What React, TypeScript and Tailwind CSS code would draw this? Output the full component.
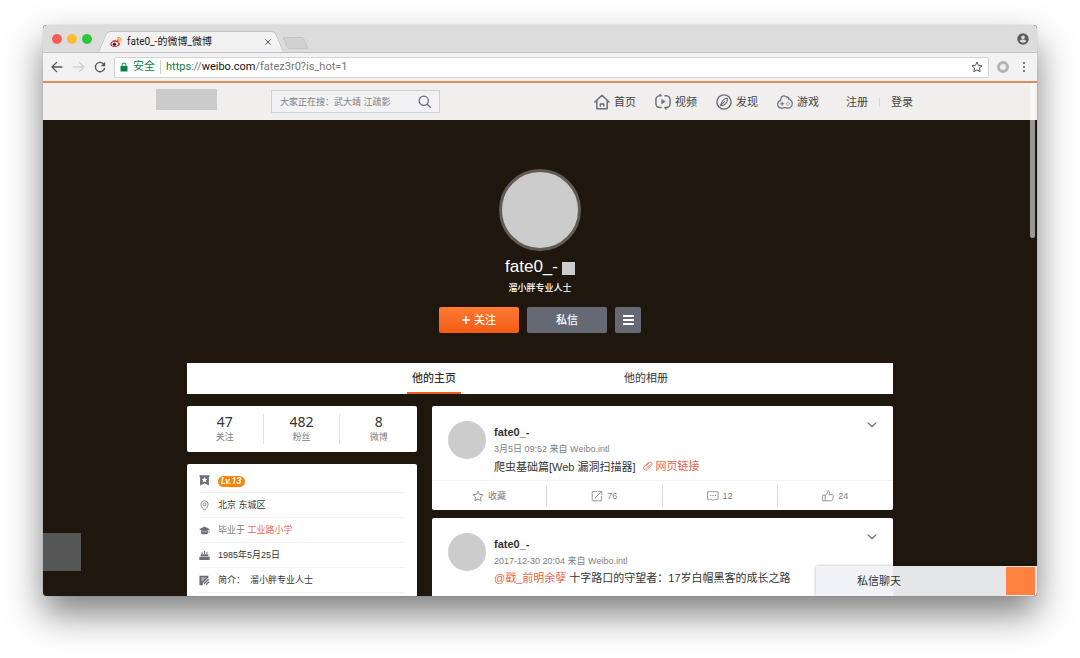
import React from "react";

type IconProps = { className?: string };

const stroke = {
  fill: "none",
  stroke: "currentColor",
  strokeLinecap: "round" as const,
  strokeLinejoin: "round" as const,
};

function WeiboIcon({ className }: IconProps) {
  return (
    <svg viewBox="0 0 24 24" className={className} aria-hidden="true">
      <path d="M9.500 8C4.500 9 .8 13 .8 16.300c0 3.400 4.200 5.700 9 5.700 6 0 10-3.200 10-6.200 0-2-1.600-3-3.200-3.400.6-1.800.4-3.400-1-3.900-1.300-.5-3.200.1-4.600.8.6-1.600-.1-2-1.500-1.300z" fill="#d9232e" />
      <ellipse cx="9.800" cy="16" rx="6.400" ry="4.300" fill="#fff" transform="rotate(-8 9.800 16)" />
      <circle cx="9" cy="16.300" r="3.400" fill="#151515" />
      <circle cx="10" cy="15.200" r="0.900" fill="#fff" />
      <path d="M15 3.400c4.600-.8 8 2.600 7 7.300M15.400 6.900c2.400-.4 3.900 1.100 3.500 3.400" fill="none" stroke="#f4a331" strokeWidth="2.400" strokeLinecap="round" />
    </svg>
  );
}

function HomeIcon({ className }: IconProps) {
  return (
    <svg viewBox="0 0 16 16" className={className} {...stroke} strokeWidth="1.500" aria-hidden="true">
      <path d="M.9 8 8 1.300 15.100 8M2.800 6.800v7.900h10.400V6.800M6.300 12V9.900h3.400V12" />
    </svg>
  );
}

function VideoIcon({ className }: IconProps) {
  return (
    <svg viewBox="0 0 16 16" className={className} {...stroke} strokeWidth="1.500" aria-hidden="true">
      <path d="M6 1.800H4.800A4 4 0 0 0 .9 5.800v3.800a4 4 0 0 0 3.900 4H6M10 1.800h1.200a4 4 0 0 1 3.900 4v3.800a4 4 0 0 1-3.900 4H10M10 13.600l1 1.500M6 1.800 5 .6" />
      <path d="M6.700 5.700v4l3.300-2z" fill="currentColor" strokeWidth="0.600" />
    </svg>
  );
}

function CompassIcon({ className }: IconProps) {
  return (
    <svg viewBox="0 0 16 16" className={className} {...stroke} strokeWidth="1.400" aria-hidden="true">
      <circle cx="8" cy="8" r="7.100" />
      <path d="M11.600 4.200C9 4.300 5.900 5.800 4.400 11.600 7.500 11.600 11.400 10 11.600 4.200zM4.600 11.400 8.400 7.600" strokeWidth="1.100" />
    </svg>
  );
}

function GameIcon({ className }: IconProps) {
  return (
    <svg viewBox="0 0 18 16" className={className} {...stroke} strokeWidth="1.400" aria-hidden="true">
      <path d="M4 6.200C4.200 3.200 6 1 8 1c1.400 0 1.800 1.300 2.900 1.300 1.600 0 2.500 1.200 2.500 2.900 2.300.5 3.800 2.200 3.800 4.500 0 3-2.300 5.200-4.900 5.200-1.500 0-2-.7-3.500-.7s-2.200.7-3.900.7C2.400 14.900.8 12.900.8 10.500.8 8.300 2 6.600 4 6.200z" />
      <path d="M5.800 8.200v3.400M4.100 9.900h3.400" strokeWidth="1.200" />
      <path d="M10.600 10h.1M13.800 10h.1M12.200 8.400h.1M12.200 11.600h.1" strokeWidth="1.300" />
    </svg>
  );
}

function SearchIcon({ className }: IconProps) {
  return (
    <svg viewBox="0 0 14 14" className={className} {...stroke} strokeWidth="1.400" aria-hidden="true">
      <circle cx="6.200" cy="6.200" r="5" />
      <path d="m10 10 3.200 3.200" />
    </svg>
  );
}

function BackIcon({ className }: IconProps) {
  return (
    <svg viewBox="0 0 12 12" className={className} {...stroke} strokeWidth="1.300" aria-hidden="true">
      <path d="M11 6H1.200M5.600 1.400 1 6l4.600 4.600" />
    </svg>
  );
}

function ForwardIcon({ className }: IconProps) {
  return (
    <svg viewBox="0 0 12 12" className={className} {...stroke} strokeWidth="1.300" aria-hidden="true">
      <path d="M1 6h9.800M6.400 1.400 11 6l-4.600 4.600" />
    </svg>
  );
}

function ReloadIcon({ className }: IconProps) {
  return (
    <svg viewBox="0 0 12 12" className={className} aria-hidden="true">
      <path d="M10 3.400A4.700 4.700 0 1 0 10.700 7" fill="none" stroke="currentColor" strokeWidth="1.300" />
      <path d="M11.200.8v4.400H6.800z" fill="currentColor" />
    </svg>
  );
}

function LockIcon({ className }: IconProps) {
  return (
    <svg viewBox="0 0 8 10" className={className} aria-hidden="true">
      <rect x="0.500" y="4" width="7" height="5.500" rx="0.600" fill="currentColor" />
      <path d="M2.200 4.400V2.800a1.800 1.800 0 0 1 3.600 0v1.600" fill="none" stroke="currentColor" strokeWidth="1" />
    </svg>
  );
}

function StarIcon({ className }: IconProps) {
  return (
    <svg viewBox="0 0 12 12" className={className} fill="none" stroke="currentColor" strokeWidth="1" strokeLinejoin="round" aria-hidden="true">
      <path d="M6 1l1.500 3.300 3.600.4-2.700 2.400.8 3.600L6 8.900l-3.200 1.800.8-3.600L.9 4.700l3.600-.4z" />
    </svg>
  );
}

function PersonIcon({ className }: IconProps) {
  return (
    <svg viewBox="0 0 24 24" className={className} fill="currentColor" aria-hidden="true">
      <path fillRule="evenodd" d="M12 .5a11.500 11.500 0 1 0 0 23 11.500 11.500 0 0 0 0-23zm0 4.300a3.700 3.700 0 1 1 0 7.400 3.700 3.700 0 0 1 0-7.400zm0 14.600c-2.800 0-5.200-1.300-6.600-3.300.1-2 4.400-3.100 6.600-3.100s6.500 1.100 6.600 3.100c-1.400 2-3.800 3.300-6.600 3.300z" />
    </svg>
  );
}

function BadgeIcon({ className }: IconProps) {
  return (
    <svg viewBox="0 0 10 10" className={className} aria-hidden="true">
      <path fillRule="evenodd" fill="currentColor" d="M.4.300h9.200v1.200H9v8L5 7.400 1 9.500v-8H.4zM5 1.900l-.8 1.600-1.700.2 1.200 1.200-.3 1.700L5 5.800l1.600.8-.3-1.700 1.200-1.200-1.700-.2z" />
    </svg>
  );
}

function PinIcon({ className }: IconProps) {
  return (
    <svg viewBox="0 0 10 10" className={className} fill="none" stroke="currentColor" strokeWidth="0.700" aria-hidden="true">
      <path d="M5 9.300C3 7.200 1.700 5.600 1.700 3.900a3.300 3.300 0 0 1 6.600 0C8.300 5.600 7 7.200 5 9.300z" />
      <circle cx="5" cy="3.900" r="1.300" />
    </svg>
  );
}

function SchoolIcon({ className }: IconProps) {
  return (
    <svg viewBox="0 0 12 10" className={className} fill="currentColor" aria-hidden="true">
      <path d="M6 .6 11.900 3.500 6 6.300.1 3.500zM2.300 5 6 6.800 9.700 5v3C8 9.700 4 9.700 2.300 8zM10.600 4.400h.7v3.200h-.7z" />
    </svg>
  );
}

function CakeIcon({ className }: IconProps) {
  return (
    <svg viewBox="0 0 10 10" className={className} fill="currentColor" aria-hidden="true">
      <path d="M2.400 1.600h.9v2h-.9zM4.500.8h1v2.800h-1zM6.700 1.600h.9v2h-.9zM1.500 3.900h7v1.700h-7zM.3 6.200h9.400v2.900H.3z" />
    </svg>
  );
}

function NoteIcon({ className }: IconProps) {
  return (
    <svg viewBox="0 0 10 10" className={className} aria-hidden="true">
      <path d="M.4.700h8.200v1.600L3.400 7.500v1.800h-3z" fill="currentColor" />
      <path d="M2 2.800h4M2 4.500h2.400" stroke="#fff" strokeWidth="0.700" />
      <path d="m4.600 8 4.200-4.200M6.400 8.900l2.900-2.900" stroke="currentColor" strokeWidth="1.200" />
    </svg>
  );
}

function ShareIcon({ className }: IconProps) {
  return (
    <svg viewBox="0 0 12 12" className={className} {...stroke} strokeWidth="0.900" aria-hidden="true">
      <path d="M6 1.600H1.200v9.200h9.200V6.400M4.200 7.800 10.600 1.500M7.600 1.300h3.200v3.200" />
    </svg>
  );
}

function CommentIcon({ className }: IconProps) {
  return (
    <svg viewBox="0 0 12 12" className={className} {...stroke} strokeWidth="0.900" aria-hidden="true">
      <path d="M.9 1.700h10.200v7.600H7.300L6 10.700 4.700 9.300H.9z" />
      <path d="M3.400 5.500h.6M5.700 5.500h.6M8 5.500h.6" />
    </svg>
  );
}

function LikeIcon({ className }: IconProps) {
  return (
    <svg viewBox="0 0 12 12" className={className} {...stroke} strokeWidth="0.900" aria-hidden="true">
      <path d="M.8 5.200h2.400v5.600H.8zM3.200 5.500c1.600-.7 2.200-2.100 2.300-4.200 0-.8 1.700-.7 1.900.9.100.9-.1 1.600-.4 2.400h3.200c.9 0 1.200.6 1.100 1.300l-.8 3.900c-.2.700-.6 1-1.300 1h-6" />
    </svg>
  );
}

function ClipIcon({ className }: IconProps) {
  return (
    <svg viewBox="0 0 10 10" className={className} {...stroke} strokeWidth="0.900" aria-hidden="true">
      <path d="M5.300 1.500 1.300 5.500c-1 1-.9 2 0 2.900.9.900 2 1 3 0l4.200-4.200c.8-.8.8-1.800.1-2.500-.7-.7-1.700-.7-2.500.1L2.700 5.200M3.500 7.200l3.800-3.800" />
    </svg>
  );
}

function ChevronIcon({ className }: IconProps) {
  return (
    <svg viewBox="0 0 10 6" className={className} {...stroke} strokeWidth="1.200" aria-hidden="true">
      <path d="M1 .9 5 4.800 9 .9" />
    </svg>
  );
}

function BrowserTabs() {
  return (
    <div className="flex h-[27px] shrink-0 items-end bg-[#dcdcdc] pl-[9px] pr-2">
      <div className="flex gap-[5px] self-center pt-px">
        <button aria-label="关闭窗口" className="size-[10px] rounded-full bg-[#fc5b57]" />
        <button aria-label="最小化" className="size-[10px] rounded-full bg-[#fdbb2f]" />
        <button aria-label="全屏" className="size-[10px] rounded-full bg-[#2ac63f]" />
      </div>
      <div className="relative ml-[6px] flex h-[21px] w-[186px] items-center pl-3 pr-[13px]">
        <span className="absolute inset-y-0 left-0 w-1/2 origin-bottom-left -skew-x-[23deg] rounded-tl-sm border-l border-t border-[#c0c0c0] bg-[#f2f2f2]" />
        <span className="absolute inset-y-0 right-0 w-3/5 origin-bottom-right skew-x-[23deg] rounded-tr-sm border-r border-t border-[#c0c0c0] bg-[#f2f2f2]" />
        <WeiboIcon className="relative size-3" />
        <span className="relative ml-[5px] flex-1 whitespace-nowrap font-[Roboto,'Noto_Sans_CJK_SC',sans-serif] text-[10px] leading-4 text-[#222]">
          fate0_-的微博_微博
        </span>
        <button aria-label="关闭标签页" className="relative text-[#555]">
          <svg viewBox="0 0 6 6" className="size-[6px]" {...stroke} strokeWidth="1" aria-hidden="true">
            <path d="M.6.6l4.800 4.800M5.400.6.6 5.400" />
          </svg>
        </button>
      </div>
      <button aria-label="新标签页" className="mb-[3px] ml-px h-3 w-[21px] skew-x-[23deg] rounded-[2px] border border-[#c4c4c4] bg-[#d2d2d2]" />
      <button aria-label="用户" className="mb-[7px] ml-auto text-[#5c5c5c]">
        <PersonIcon className="size-3" />
      </button>
    </div>
  );
}

function AddressBar() {
  return (
    <div className="flex h-[29px] shrink-0 items-center border-t border-[#c0c0c0] bg-[#f2f2f2] pl-2 pr-3">
      <button aria-label="后退" className="text-[#555]"><BackIcon className="size-3" /></button>
      <button aria-label="前进" className="ml-[10px] text-[#cfcfcf]"><ForwardIcon className="size-3" /></button>
      <button aria-label="重新加载" className="ml-[9px] text-[#555]"><ReloadIcon className="size-3" /></button>
      <div className="ml-2 flex h-[21px] min-w-0 flex-1 items-center rounded-[2px] border border-[#d4d4d4] bg-white px-[5px] font-[Roboto,'Noto_Sans_CJK_SC',sans-serif] text-[11px] leading-4">
        <LockIcon className="h-[10px] w-2 text-[#0b8043]" />
        <span className="ml-[5px] text-[#0b8043]">安全</span>
        <span className="mx-[5px] h-[14px] w-px bg-[#d0d0d0]" />
        <div role="textbox" aria-label="地址" tabIndex={0} className="min-w-0 flex-1 whitespace-nowrap text-[#777]">
          <span className="text-[#0b8043]">https</span>://<span className="text-[#111]">weibo.com</span>/fatez3r0?is_hot=1
        </div>
        <button aria-label="加入书签" className="text-[#555]"><StarIcon className="size-3" /></button>
      </div>
      <button aria-label="扩展程序" className="ml-2 size-3 rounded-full border-[3px] border-[#b4b4b4] bg-[#efefef]" />
      <button aria-label="菜单" className="ml-[14px] flex flex-col gap-[2px]">
        <span className="size-[2px] rounded-full bg-[#555]" />
        <span className="size-[2px] rounded-full bg-[#555]" />
        <span className="size-[2px] rounded-full bg-[#555]" />
      </button>
    </div>
  );
}

const navItems = [
  { label: "首页", Icon: HomeIcon },
  { label: "视频", Icon: VideoIcon },
  { label: "发现", Icon: CompassIcon },
  { label: "游戏", Icon: GameIcon },
];

function SiteHeader() {
  return (
    <header className="flex h-[39px] shrink-0 items-center border-t-2 border-[#e2885c] bg-[#f0efed] pl-[113px] pr-[124px]">
      <a href="#home" aria-label="微博" className="mb-1 h-[21px] w-[61px] bg-[#cbcbcb]" />
      <form className="ml-[54px] flex h-[23px] w-[169px] items-center border border-[#ccd0d8] bg-[#f2f2f5] px-2">
        <input
          type="text"
          aria-label="搜索"
          placeholder="大家正在搜：武大靖 江疏影"
          className="min-w-0 flex-1 bg-transparent text-[9px] leading-4 text-[#333] outline-none placeholder:text-[#808080]"
        />
        <button type="button" aria-label="搜索" className="text-[#696e78]"><SearchIcon className="size-[13px]" /></button>
      </form>
      <nav className="ml-auto flex items-center text-[11px] leading-4 text-[#444]">
        <div className="flex items-center gap-[19px]">
          {navItems.map(({ label, Icon }) => (
            <a key={label} href={`#${label}`} className="flex items-center gap-1 whitespace-nowrap">
              <Icon className="size-4 text-[#696e78]" />
              {label}
            </a>
          ))}
        </div>
        <a href="#register" className="ml-[27px]">注册</a>
        <span className="mx-[11px] h-[10px] w-px bg-[#d9d9d9]" />
        <a href="#login">登录</a>
      </nav>
    </header>
  );
}

function Profile() {
  return (
    <section className="flex flex-col items-center pt-[49px] text-white">
      <div className="size-[82px] rounded-full border-[3px] border-[#625b54] bg-[#cccccc]" />
      <div className="mt-[6px] flex items-center gap-1">
        <h1 className="text-[17px] leading-5">fate0_-</h1>
        <span className="mt-[2px] size-[13px] bg-[#cccccc]" />
      </div>
      <p className="mt-1 text-[9px] font-medium leading-[14px]">溜小胖专业人士</p>
      <div className="mt-3 flex gap-2 text-[11px] font-medium leading-4">
        <button className="flex h-[26px] w-20 items-center justify-center gap-1 rounded-[2px] bg-linear-to-b from-[#ff7a33] to-[#f35c12]">
          <svg viewBox="0 0 8 8" className="size-2" stroke="currentColor" strokeWidth="1.500" aria-hidden="true">
            <path d="M4 0v8M0 4h8" />
          </svg>
          关注
        </button>
        <button className="h-[26px] w-20 rounded-[2px] bg-[#656974]">私信</button>
        <button aria-label="更多" className="flex size-[26px] flex-col items-center justify-center gap-[2px] rounded-[2px] bg-[#656974]">
          <span className="h-[2px] w-[11px] bg-white" />
          <span className="h-[2px] w-[11px] bg-white" />
          <span className="h-[2px] w-[11px] bg-white" />
        </button>
      </div>
    </section>
  );
}

function ProfileTabs() {
  return (
    <nav className="mt-[30px] flex h-[31px] justify-center gap-[158px] bg-white text-[11px] leading-[30px] text-[#333]">
      <a href="#main" aria-current="page" className="border-b-2 border-[#e9611c] px-[5px] font-medium">他的主页</a>
      <a href="#album" className="px-[5px]">他的相册</a>
    </nav>
  );
}

const stats = [
  { value: "47", label: "关注" },
  { value: "482", label: "粉丝" },
  { value: "8", label: "微博" },
];

const infoRows = [
  {
    Icon: BadgeIcon,
    content: (
      <span className="mt-[2px] rounded-full bg-[#ff8209] px-[3px] font-[Roboto,sans-serif] text-[9px] font-bold italic leading-[11px] text-white">
        Lv.13
      </span>
    ),
  },
  { Icon: PinIcon, content: <span>北京 东城区</span> },
  { Icon: SchoolIcon, content: <span className="text-[#808080]">毕业于 <a href="#school" className="text-[#eb6550]">工业路小学</a></span> },
  { Icon: CakeIcon, content: <span>1985年5月25日</span> },
  { Icon: NoteIcon, content: <span>简介：&nbsp; 溜小胖专业人士</span> },
];

function Sidebar() {
  return (
    <aside className="flex w-[230px] shrink-0 flex-col gap-3">
      <div className="grid grid-cols-3 divide-x divide-[#e4e4e4] rounded-[2px] bg-white py-2">
        {stats.map((s) => (
          <a key={s.label} href={`#${s.label}`} className="flex flex-col items-center">
            <strong className="font-['Noto_Sans','Noto_Sans_CJK_SC',sans-serif] text-[14px] font-normal leading-4 text-[#333]">{s.value}</strong>
            <span className="text-[9px] leading-[14px] text-[#808080]">{s.label}</span>
          </a>
        ))}
      </div>
      <ul className="rounded-[2px] bg-white px-3 pb-4 pt-1 text-[9px] leading-4 text-[#333]">
        {infoRows.map(({ Icon, content }, i) => (
          <li key={i} className="flex h-[25px] items-center gap-2 border-b border-[#f2f2f2]">
            <Icon className="size-[11px] text-[#696e78]" />
            {content}
          </li>
        ))}
      </ul>
    </aside>
  );
}

type PostProps = { time: string; counts?: [string, string, string]; children: React.ReactNode };

function Post({ time, counts, children }: PostProps) {
  const actions = counts && [
    { name: "收藏", Icon: StarIcon, text: "收藏" },
    { name: "转发", Icon: ShareIcon, text: counts[0] },
    { name: "评论", Icon: CommentIcon, text: counts[1] },
    { name: "赞", Icon: LikeIcon, text: counts[2] },
  ];
  return (
    <article className="rounded-[2px] bg-white">
      <div className="flex items-start gap-2 px-4 pb-1 pt-[15px]">
        <div className="size-[38px] shrink-0 rounded-full bg-[#cccccc]" />
        <div className="flex-1 pt-[3px]">
          <h2 className="text-[11px] font-bold leading-4 text-[#333]">fate0_-</h2>
          <p className="pt-px text-[9px] leading-4 text-[#808080]">{time} 来自 Weibo.intl</p>
          <p className="whitespace-nowrap text-[11px] leading-[18px] text-[#333]">{children}</p>
        </div>
        <button aria-label="展开" className="mt-px text-[#696e78]"><ChevronIcon className="h-[6px] w-[10px]" /></button>
      </div>
      {actions ? (
        <div className="grid h-[30px] grid-cols-4 items-center divide-x divide-[#d9d9d9] border-t border-[#f2f2f2]">
          {actions.map(({ name, Icon, text }) => (
            <button key={name} aria-label={name} className="flex h-5 items-center justify-center gap-1 text-[9px] leading-4 text-[#808080]">
              <Icon className="size-3 text-[#8d9097]" />
              {text}
            </button>
          ))}
        </div>
      ) : (
        <div className="h-[30px]" />
      )}
    </article>
  );
}

export default function App() {
  return (
    <div className="flex h-screen bg-white px-[43px] pb-[62px] pt-[25px] font-['Liberation_Sans','Noto_Sans_CJK_SC',sans-serif]">
      <div className="relative flex min-w-0 flex-1 flex-col overflow-hidden rounded-[4px] bg-[#1f170e] shadow-[0_18px_36px_rgba(0,0,0,0.5),0_0_1px_rgba(0,0,0,0.4)]">
        <BrowserTabs />
        <AddressBar />
        <div className="relative flex min-h-0 flex-1 flex-col overflow-hidden">
          <SiteHeader />
          <main className="mx-auto w-full max-w-[706px]">
            <Profile />
            <ProfileTabs />
            <div className="mt-3 flex gap-[15px]">
              <Sidebar />
              <div className="flex min-w-0 flex-1 flex-col gap-2">
                <Post time="3月5日 09:52" counts={["76", "12", "24"]}>
                  爬虫基础篇[Web 漏洞扫描器]
                  <a href="#link" className="ml-[7px] inline-flex items-center gap-[3px] text-[#eb6550]">
                    <ClipIcon className="size-[10px]" />
                    网页链接
                  </a>
                </Post>
                <Post time="2017-12-30 20:04">
                  <a href="#mention" className="text-[#eb6550]">@戳_前明余孽</a> 十字路口的守望者：17岁白帽黑客的成长之路
                </Post>
              </div>
            </div>
          </main>
          <div className="absolute right-[2px] top-[2px] h-[155px] w-[5px] rounded-b-full bg-white/55" />
          <div className="absolute bottom-[25px] left-0 size-[38px] bg-[#565656]" />
          <div className="absolute bottom-0 right-0 flex h-[30px] w-[221px] items-center justify-between bg-[#f0f1f4]/95 pl-[41px] pr-[2px] shadow-[0_0_3px_rgba(0,0,0,0.3)]">
            <button className="text-[11px] leading-4 text-[#333]">私信聊天</button>
            <button aria-label="打开聊天" className="h-7 w-[29px] bg-[#ff8140]" />
          </div>
        </div>
      </div>
    </div>
  );
}
